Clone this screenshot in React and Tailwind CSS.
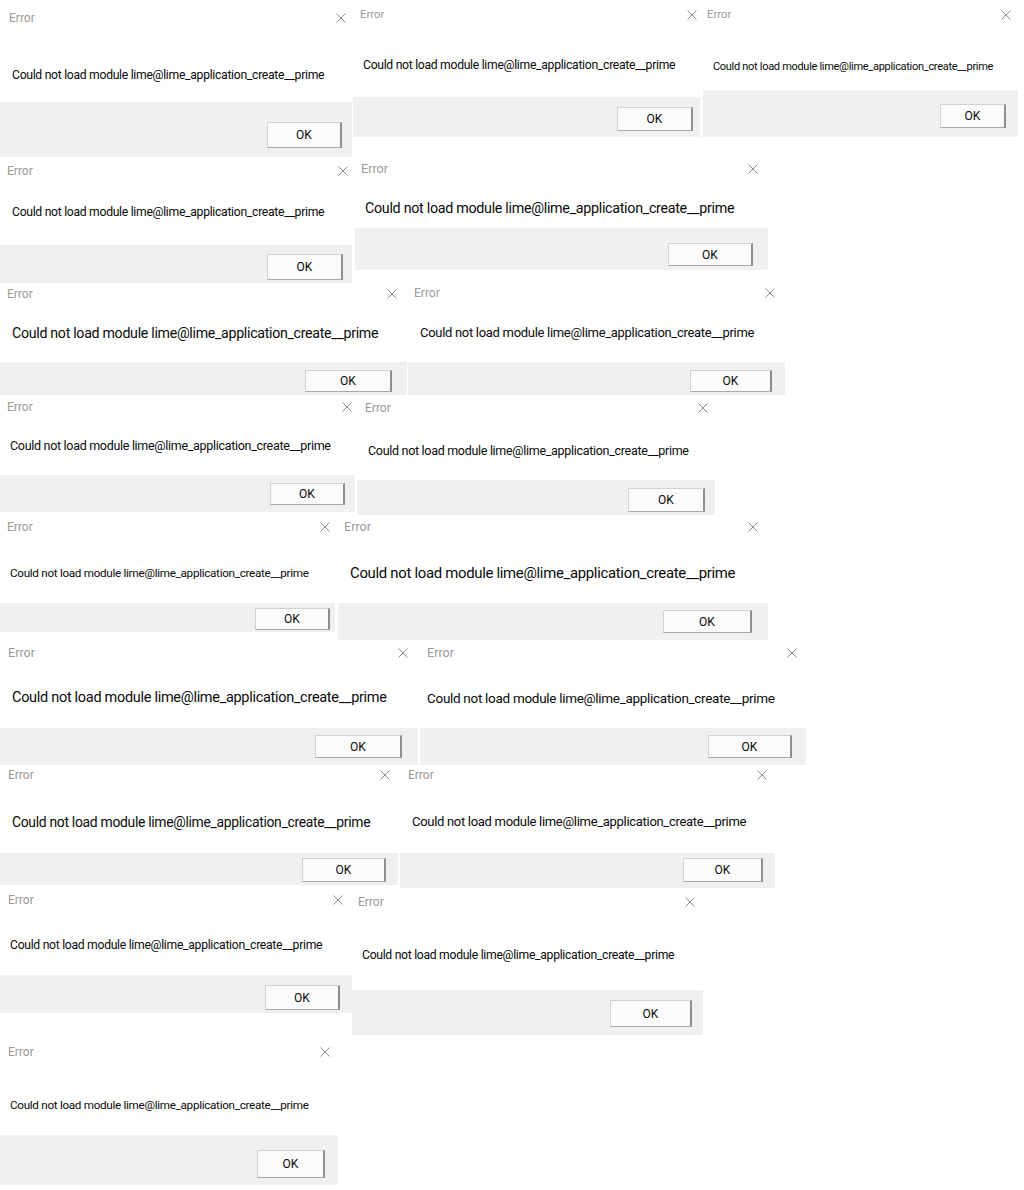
import React from 'react';

const MSG = "Could not load module lime@lime_application_create__prime";

// each dialog: sizes taken from the screenshot, all classes written out
const rows = [
  [
    { box: "w-[352px] h-[157px]", head: "h-[36px] pl-[9px] pr-[6px]", title: "text-[12px]", body: "h-[66px] pl-[12px] pt-[31px]", msg: "text-[12.2px]", foot: "pt-[20px] pr-[10px]", btn: "w-[75px] h-[26px]" },
    { box: "w-[347px] h-[137px] ml-[1px]", head: "h-[30px] pl-[7px] pr-[3px]", title: "text-[11.3px]", body: "h-[67px] pl-[10px] pt-[27px]", msg: "text-[12.2px]", foot: "pt-[10px] pr-[7px]", btn: "w-[76px] h-[24px]" },
    { box: "w-[315px] h-[137px] ml-[3px]", head: "h-[30px] pl-[4px] pr-[7px]", title: "text-[11.3px]", body: "h-[60px] pl-[10px] pt-[29px]", msg: "text-[11px]", foot: "pt-[14px] pr-[12px]", btn: "w-[66px] h-[24px]" },
  ],
  [
    { box: "w-[352px] h-[126px]", head: "h-[28px] pl-[7px] pr-[4px]", title: "text-[12px]", body: "h-[60px] pl-[12px] pt-[19px]", msg: "text-[12.2px]", foot: "pt-[9px] pr-[9px]", btn: "w-[76px] h-[26px]" },
    { box: "w-[413px] h-[113px] ml-[3px]", head: "h-[24px] pl-[6px] pr-[10px]", title: "text-[12.6px]", body: "h-[47px] pl-[10px] pt-[19px]", msg: "text-[14.3px]", foot: "pt-[15px] pr-[15px]", btn: "w-[85px] h-[23px]" },
  ],
  [
    { box: "w-[407px] h-[112px]", head: "h-[22px] pl-[7px] pr-[10px]", title: "text-[12px]", body: "h-[57px] pl-[12px] pt-[20px]", msg: "text-[14.2px]", foot: "pt-[8px] pr-[15px]", btn: "w-[87px] h-[22px]" },
    { box: "w-[377px] h-[112px] ml-[1px]", head: "h-[20px] pl-[6px] pr-[10px]", title: "text-[12px]", body: "h-[59px] pl-[12px] pt-[22px]", msg: "text-[13px]", foot: "pt-[8px] pr-[13px]", btn: "w-[82px] h-[22px]" },
  ],
  [
    { box: "w-[355px] h-[117px]", head: "h-[24px] pl-[7px] pr-[3px]", title: "text-[12px]", body: "h-[56px] pl-[10px] pt-[19px]", msg: "text-[12.5px]", foot: "pt-[8px] pr-[10px]", btn: "w-[75px] h-[22px]" },
    { box: "w-[358px] h-[118px] ml-[2px] mt-[2px]", head: "h-[22px] pl-[8px] pr-[7px]", title: "text-[12px]", body: "h-[61px] pl-[11px] pt-[24px]", msg: "text-[12.5px]", foot: "pt-[8px] pr-[10px]", btn: "w-[77px] h-[24px]" },
  ],
  [
    { box: "w-[335px] h-[117px]", head: "h-[24px] pl-[7px] pr-[5px]", title: "text-[12px]", body: "h-[64px] pl-[10px] pt-[26px]", msg: "text-[11.7px]", foot: "pt-[5px] pr-[5px]", btn: "w-[75px] h-[22px]" },
    { box: "w-[430px] h-[125px] ml-[3px]", head: "h-[24px] pl-[6px] pr-[10px]", title: "text-[12.6px]", body: "h-[64px] pl-[12px] pt-[26px]", msg: "text-[14.9px]", foot: "pt-[7px] pr-[16px]", btn: "w-[89px] h-[23px]" },
  ],
  [
    { box: "w-[418px] h-[125px]", head: "h-[26px] pl-[8px] pr-[10px]", title: "text-[12.6px]", body: "h-[62px] pl-[12px] pt-[24px]", msg: "text-[14.5px]", foot: "pt-[7px] pr-[16px]", btn: "w-[87px] h-[23px]" },
    { box: "w-[386px] h-[125px] ml-[2px]", head: "h-[26px] pl-[7px] pr-[9px]", title: "text-[12.6px]", body: "h-[62px] pl-[7px] pt-[24px]", msg: "text-[13.5px]", foot: "pt-[7px] pr-[14px]", btn: "w-[84px] h-[23px]" },
  ],
  [
    { box: "w-[398px] h-[120px]", head: "h-[20px] pl-[8px] pr-[8px]", title: "text-[12px]", body: "h-[68px] pl-[12px] pt-[29px]", msg: "text-[13.9px]", foot: "pt-[5px] pr-[12px]", btn: "w-[84px] h-[24px]" },
    { box: "w-[375px] h-[123px] ml-[2px]", head: "h-[20px] pl-[8px] pr-[8px]", title: "text-[12px]", body: "h-[68px] pl-[12px] pt-[29px]", msg: "text-[13px]", foot: "pt-[5px] pr-[12px]", btn: "w-[80px] h-[24px]" },
  ],
  [
    { box: "w-[352px] h-[125px]", head: "h-[24px] pl-[8px] pr-[9px]", title: "text-[12px]", body: "h-[63px] pl-[10px] pt-[25px]", msg: "text-[12.2px]", foot: "pt-[10px] pr-[12px]", btn: "w-[75px] h-[25px]" },
    { box: "w-[351px] h-[143px] mt-[4px]", head: "h-[20px] pl-[6px] pr-[8px]", title: "text-[12px]", body: "h-[78px] pl-[10px] pt-[35px]", msg: "text-[12.2px]", foot: "pt-[10px] pr-[11px]", btn: "w-[82px] h-[27px]" },
  ],
  [
    { box: "w-[338px] h-[150px]", head: "h-[34px] pl-[8px] pr-[8px]", title: "text-[12px]", body: "h-[66px] pl-[10px] pt-[28px]", msg: "text-[11.7px]", foot: "pt-[15px] pr-[13px]", btn: "w-[68px] h-[28px]" },
  ],
];

function CloseIcon() {
  return (
    <svg viewBox="0 0 10 10" className="w-[10px] h-[10px]">
      <path d="M0.5 0.5 L9.5 9.5 M9.5 0.5 L0.5 9.5" stroke="#8c8c8c" strokeWidth="1" fill="none" />
    </svg>
  );
}

function ErrorDialog({ c }) {
  return (
    <div className={`flex flex-col shrink-0 bg-white ${c.box}`}>
      <div className={`flex items-center justify-between shrink-0 ${c.head}`}>
        <span className={`leading-none text-[#9a9a9a] ${c.title}`}>Error</span>
        <CloseIcon />
      </div>
      <div className={`shrink-0 ${c.body}`}>
        <p className={`leading-[16px] whitespace-nowrap tracking-[-0.3px] text-[#0a0a0a] ${c.msg}`}>{MSG}</p>
      </div>
      <div className={`flex-1 flex justify-end items-start bg-[#f0f0f0] ${c.foot}`}>
        <button
          className={`flex items-center justify-center bg-[#fbfbfb] border border-[#d2d2d2] border-r-2 border-r-[#8f8f8f] border-b-[#a9a9a9] text-[12px] text-[#0a0a0a] ${c.btn}`}
        >
          OK
        </button>
      </div>
    </div>
  );
}

export default function App() {
  return (
    <div className="w-[1024px] min-h-[1190px] bg-white flex flex-col font-['Roboto',sans-serif]">
      {rows.map((row, i) => (
        <div key={i} className="flex items-start">
          {row.map((c, j) => (
            <ErrorDialog key={j} c={c} />
          ))}
        </div>
      ))}
    </div>
  );
}
